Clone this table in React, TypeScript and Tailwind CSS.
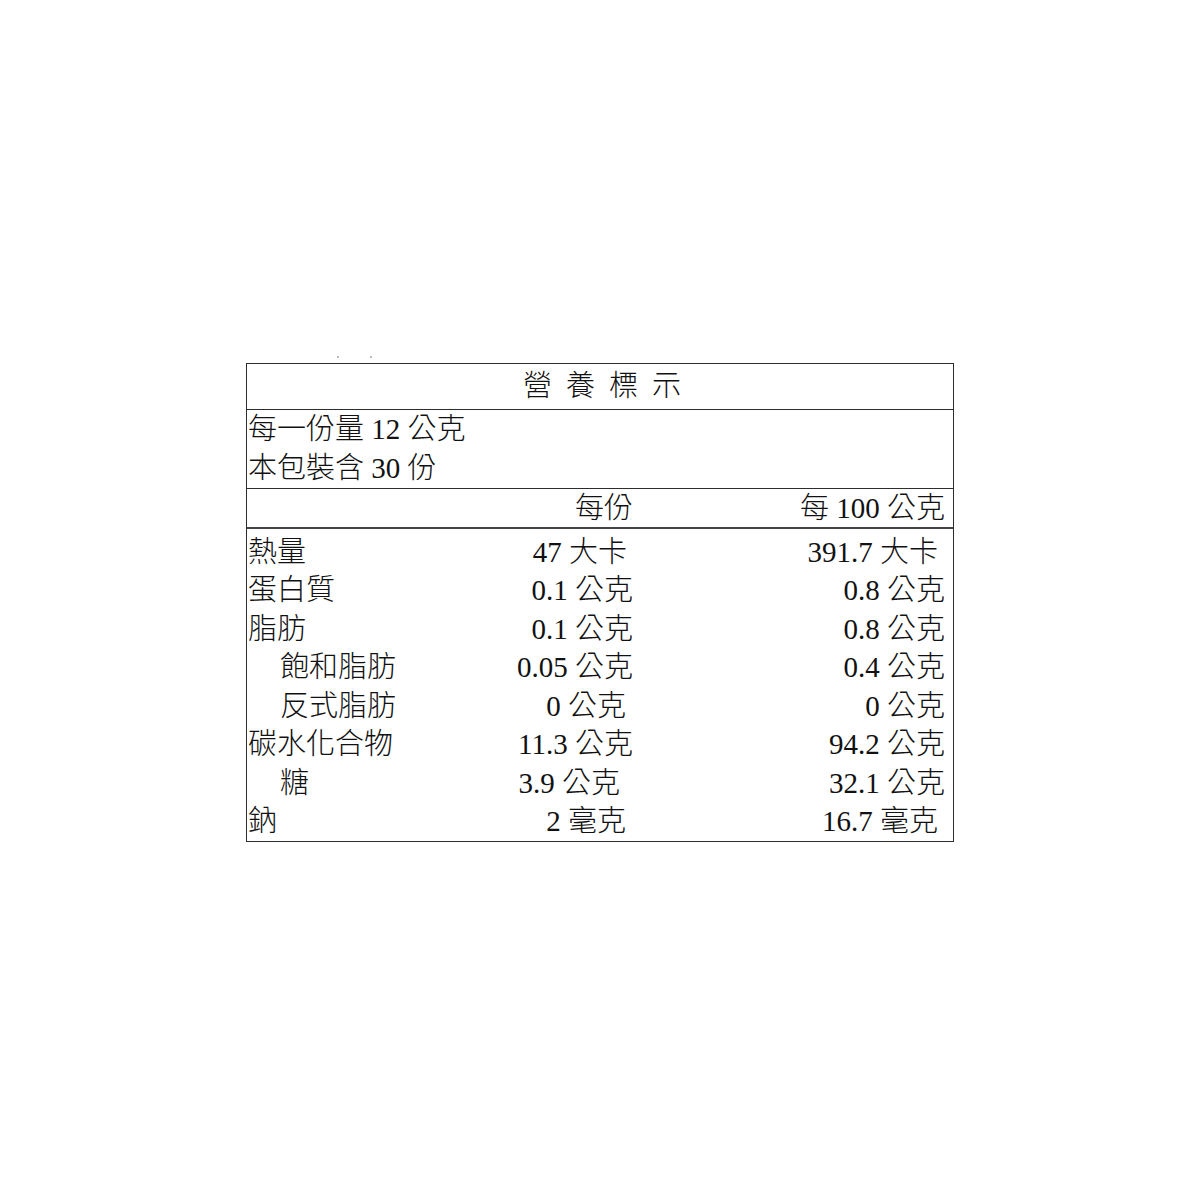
import React from 'react';

type Row = {
  name: string;
  indent?: boolean;
  perServing: string;
  per100: string;
  /** right padding of each value cell; some labels carry a trailing gap */
  padA: string;
  padB: string;
};

const rows: Row[] = [
  { name: '熱量', perServing: '47 大卡', per100: '391.7 大卡', padA: 'pr-[6px]', padB: 'pr-[15px]' },
  { name: '蛋白質', perServing: '0.1 公克', per100: '0.8 公克', padA: 'pr-0', padB: 'pr-[8px]' },
  { name: '脂肪', perServing: '0.1 公克', per100: '0.8 公克', padA: 'pr-0', padB: 'pr-[8px]' },
  { name: '飽和脂肪', indent: true, perServing: '0.05 公克', per100: '0.4 公克', padA: 'pr-0', padB: 'pr-[8px]' },
  { name: '反式脂肪', indent: true, perServing: '0 公克', per100: '0 公克', padA: 'pr-[7px]', padB: 'pr-[8px]' },
  { name: '碳水化合物', perServing: '11.3 公克', per100: '94.2 公克', padA: 'pr-0', padB: 'pr-[8px]' },
  { name: '糖', indent: true, perServing: '3.9 公克', per100: '32.1 公克', padA: 'pr-[13px]', padB: 'pr-[8px]' },
  { name: '鈉', perServing: '2 毫克', per100: '16.7 毫克', padA: 'pr-[7px]', padB: 'pr-[15px]' },
];

const font = { fontFamily: '"Liberation Serif", "Noto Sans CJK TC", serif' };

export default function App() {
  return (
    <div className="min-h-[1200px] w-[1200px] bg-white pt-[363px] font-light text-[#111]" style={font}>
      <div className="relative mx-auto w-[708px]">
        {/* faint scan specks above the frame */}
        <div className="absolute left-[91px] top-[-7px] h-[2px] w-[2px] bg-[#bbb]" />
        <div className="absolute left-[124px] top-[-7px] h-[2px] w-[2px] bg-[#bbb]" />

        <div className="border border-[#2e2e2e] text-[29px] leading-[39px]">
          {/* Title */}
          <div className="flex h-[46px] items-center justify-center gap-[14px] border-b border-[#2e2e2e] pl-[4px]">
            <span>營</span>
            <span>養</span>
            <span>標</span>
            <span>示</span>
          </div>

          {/* Serving info */}
          <div className="border-b border-[#2e2e2e] pl-[1px]">
            <div>每一份量 12 公克</div>
            <div>本包裝含 30 份</div>
          </div>

          {/* Column header */}
          <div className="flex h-[40px] items-center border-b-2 border-[#444]">
            <div className="w-[386px] text-right">每份</div>
            <div className="flex-1 pr-[8px] text-right">每 100 公克</div>
          </div>

          {/* Nutrients */}
          <div className="pt-[4px]">
            {rows.map((r) => (
              <div key={r.name} className="flex h-[38.5px] items-center">
                <div className={`w-[210px] ${r.indent ? 'pl-[33px]' : 'pl-[1px]'}`}>{r.name}</div>
                <div className={`w-[176px] text-right ${r.padA}`}>{r.perServing}</div>
                <div className={`flex-1 text-right ${r.padB}`}>{r.per100}</div>
              </div>
            ))}
          </div>
        </div>
      </div>
    </div>
  );
}
